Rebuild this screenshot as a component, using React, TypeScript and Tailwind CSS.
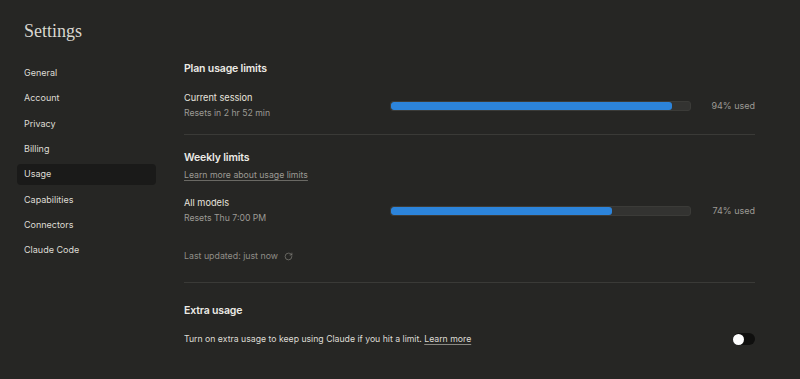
import { RotateCw } from "lucide-react";

const NAV = ["General", "Account", "Privacy", "Billing", "Usage", "Capabilities", "Connectors", "Claude Code"];

function UsageBar({ pct }: { pct: number }) {
  return (
    <div className="h-[10px] w-[301px] rounded-[3px] bg-[#333331] border border-[#3b3b38] overflow-hidden">
      <div className="h-full rounded-[3px] bg-[#2c84db]" style={{ width: `${pct}%` }} />
    </div>
  );
}

function UsageRow({ title, sub, pct }: { title: string; sub: string; pct: number }) {
  return (
    <div className="flex items-center">
      <div className="w-[206px] flex flex-col gap-[1px]">
        <span className="text-[9.2px] leading-[14px] text-[#e6e4de]">{title}</span>
        <span className="text-[8.7px] leading-[14px] text-[#9c9a94]">{sub}</span>
      </div>
      <UsageBar pct={pct} />
      <span className="flex-1 text-right text-[9px] text-[#9c9a94]">{pct}% used</span>
    </div>
  );
}

export default function App() {
  return (
    <div className="w-[800px] h-[379px] bg-[#262624] overflow-hidden font-['Inter',sans-serif]">
      <h1 className="pl-6 pt-[20px] h-[61px] text-[18px] leading-[22px] text-[#d9d7d0] font-['Liberation_Serif',serif]">
        Settings
      </h1>
      <div className="flex">
        <nav className="w-[156px] pl-[17px] flex flex-col gap-[4.4px] pt-[1px]">
          {NAV.map((item) => (
            <div
              key={item}
              className={`h-[21px] flex items-center pl-[7px] rounded-[4px] text-[9px] text-[#dedcd5] ${
                item === "Usage" ? "bg-[#1a1a19]" : ""
              }`}
            >
              {item}
            </div>
          ))}
        </nav>
        <main className="ml-[28px] pt-[1px] w-[571px] flex flex-col">
          <h2 className="text-[10.5px] leading-[14px] font-semibold tracking-[-0.15px] text-[#ecebe6]">Plan usage limits</h2>
          <div className="mt-[15px]">
            <UsageRow title="Current session" sub="Resets in 2 hr 52 min" pct={94} />
          </div>
          <div className="mt-[14px] border-t border-[#3a3a37]" />

          <h2 className="mt-[16px] text-[10.5px] leading-[14px] font-semibold tracking-[-0.15px] text-[#ecebe6]">Weekly limits</h2>
          <a className="mt-[3px] self-start text-[8.7px] leading-[14px] text-[#9c9a94] underline decoration-[#6a6964] underline-offset-2">
            Learn more about usage limits
          </a>
          <div className="mt-[14px]">
            <UsageRow title="All models" sub="Resets Thu 7:00 PM" pct={74} />
          </div>
          <div className="mt-[24px] flex items-center gap-[6px] text-[8.8px] leading-[14px] text-[#8f8d87]">
            <span>Last updated: just now</span>
            <RotateCw size={9} strokeWidth={1.6} />
          </div>
          <div className="mt-[19px] border-t border-[#3a3a37]" />

          <h2 className="mt-[21px] text-[10.5px] leading-[14px] font-semibold tracking-[-0.15px] text-[#ecebe6]">Extra usage</h2>
          <div className="mt-[14px] flex items-center justify-between">
            <span className="text-[8.7px] leading-[14px] text-[#dedcd5]">
              Turn on extra usage to keep using Claude if you hit a limit.{" "}
              <a className="underline decoration-[#8a8983] underline-offset-2">Learn more</a>
            </span>
            <div className="w-[22px] h-[12px] rounded-full bg-[#0f0f0e] flex items-center">
              <div className="w-[11px] h-[11px] rounded-full bg-white" />
            </div>
          </div>
        </main>
      </div>
    </div>
  );
}
